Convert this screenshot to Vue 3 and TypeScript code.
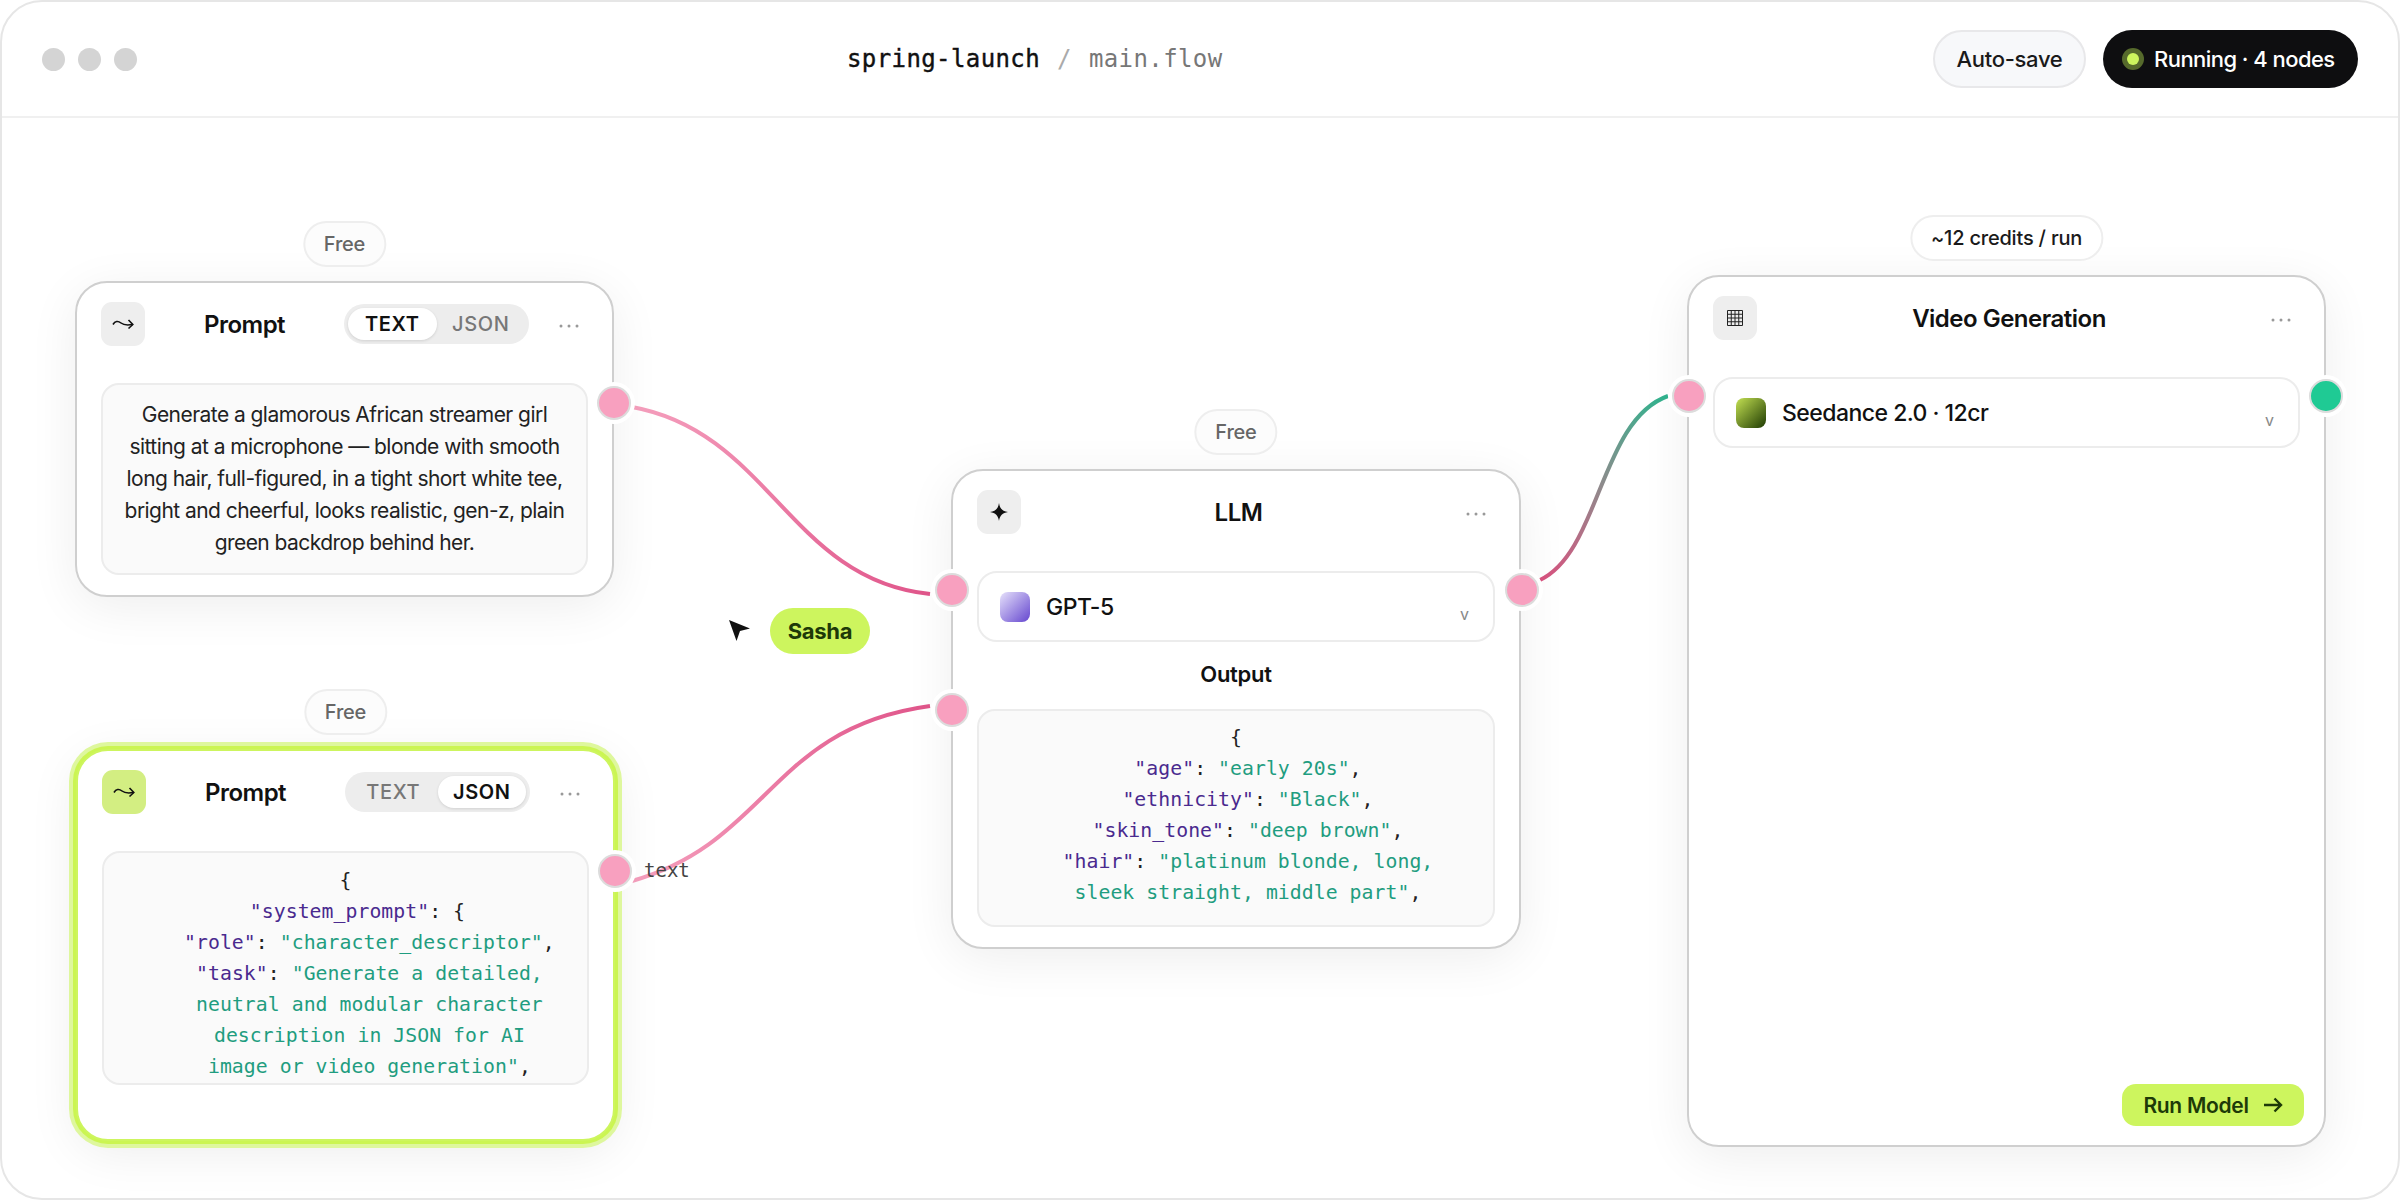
<template>
  <div class="window">
    <header class="topbar">
      <div class="lights">
        <span v-for="n in 3" :key="n" class="light"></span>
      </div>
      <div class="path">
        <span class="path-project">spring-launch</span>
        <span class="path-sep">/</span>
        <span class="path-file">main.flow</span>
      </div>
      <div class="actions">
        <button class="btn-autosave">Auto-save</button>
        <div class="status">
          <span class="status-dot"></span>
          <span>Running · 4 nodes</span>
        </div>
      </div>
    </header>

    <main class="canvas">
      <svg class="wires" width="2400" height="1200" viewBox="0 0 2400 1200" fill="none">
        <defs>
          <linearGradient id="wire-a" gradientUnits="userSpaceOnUse" x1="632" y1="407" x2="930" y2="594">
            <stop offset="0" stop-color="#f59fbd" />
            <stop offset="1" stop-color="#e0558a" />
          </linearGradient>
          <linearGradient id="wire-b" gradientUnits="userSpaceOnUse" x1="632" y1="881" x2="930" y2="706">
            <stop offset="0" stop-color="#f59fbd" />
            <stop offset="1" stop-color="#e0558a" />
          </linearGradient>
          <linearGradient id="wire-c" gradientUnits="userSpaceOnUse" x1="1540" y1="580" x2="1668" y2="396">
            <stop offset="0" stop-color="#d9527f" />
            <stop offset="0.5" stop-color="#8f8a8c" />
            <stop offset="1" stop-color="#2fb48e" />
          </linearGradient>
        </defs>
        <path d="M632 407C770 432 790 580 930 594" stroke="url(#wire-a)" stroke-width="4" />
        <path d="M632 881C770 842 770 728 930 706" stroke="url(#wire-b)" stroke-width="4" />
        <path d="M1540 580C1600 552 1600 420 1668 396" stroke="url(#wire-c)" stroke-width="4" />
      </svg>

      <section v-for="node in nodes" :key="node.id" class="node" :class="[node.id, { selected: node.selected }]">
        <span class="badge" :class="{ strong: node.badgeStrong }">{{ node.badge }}</span>

        <div class="node-head">
          <span class="node-icon">
            <svg v-if="node.icon === 'squiggle'" width="22" height="12" viewBox="0 0 22 12" fill="none" stroke="#111" stroke-width="1.6">
              <path d="M1 6.500C3 3 6 2.500 9 5S15 7.500 20.500 6.500" />
              <path d="M16.500 2L20.800 6.500L16.500 10.500" />
            </svg>
            <svg v-else-if="node.icon === 'star'" width="18" height="18" viewBox="0 0 18 18">
              <path d="M9 0C9.800 5.500 12.500 8.200 18 9C12.500 9.800 9.800 12.500 9 18C8.200 12.500 5.500 9.800 0 9C5.500 8.200 8.200 5.500 9 0Z" fill="#111" />
            </svg>
            <svg v-else width="16" height="16" viewBox="0 0 16 16" fill="none" stroke="#222" stroke-width="1">
              <path d="M.5 .5H15.500V15.500H.5ZM.5 4.250H15.500M.5 8H15.500M.5 11.750H15.500M4.250 .5V15.500M8 .5V15.500M11.750 .5V15.500" />
            </svg>
          </span>
          <h3 class="node-title">{{ node.title }}</h3>
          <div v-if="node.mode" class="mode">
            <span class="mode-opt" :class="{ on: node.mode === 'TEXT' }">TEXT</span>
            <span class="mode-opt" :class="{ on: node.mode === 'JSON' }">JSON</span>
          </div>
          <svg class="more" width="20" height="4" viewBox="0 0 20 4" fill="#999">
            <circle cx="2" cy="2" r="1.500" />
            <circle cx="10" cy="2" r="1.500" />
            <circle cx="18" cy="2" r="1.500" />
          </svg>
        </div>

        <div v-if="node.model" class="select">
          <span class="swatch" :class="node.model.swatch"></span>
          <span class="select-label">{{ node.model.label }}</span>
          <span class="chevron">v</span>
        </div>

        <div v-if="node.output" class="output-label">Output</div>

        <p v-if="node.text" class="box text-box">{{ node.text }}</p>

        <div v-if="node.code" class="box code-box">
          <div v-for="(line, i) in node.code" :key="i" class="code-line">
            <span v-for="(tok, j) in line" :key="j" :class="tok.c">{{ tok.t }}</span>
          </div>
        </div>

        <button v-if="node.run" class="run">
          Run Model
          <svg width="20" height="16" viewBox="0 0 20 16" fill="none" stroke="#1d3a08" stroke-width="2.400">
            <path d="M1 8H18M11.500 1.500L18 8L11.500 14.500" />
          </svg>
        </button>

        <span v-for="p in node.ports" :key="p.cls" class="port" :class="p.cls"></span>
        <span v-if="node.selected" class="port-label">text</span>
      </section>

      <div class="cursor">
        <svg width="22" height="22" viewBox="0 0 22 22">
          <path d="M0 0L21 8.500L11 11L7.500 21Z" fill="#111" />
        </svg>
        <span class="cursor-tag">Sasha</span>
      </div>
    </main>
  </div>
</template>

<script setup lang="ts">
type Token = { t: string; c: string };

interface FlowNode {
  id: string;
  title: string;
  badge: string;
  badgeStrong?: boolean;
  icon: 'squiggle' | 'star' | 'grid';
  mode?: 'TEXT' | 'JSON';
  selected?: boolean;
  model?: { label: string; swatch: string };
  output?: boolean;
  text?: string;
  code?: Token[][];
  run?: boolean;
  ports: { cls: string }[];
}

const k = (t: string): Token => ({ t, c: 'key' });
const s = (t: string): Token => ({ t, c: 'str' });
const p = (t: string): Token => ({ t, c: 'punc' });

const nodes: FlowNode[] = [
  {
    id: 'prompt-a',
    title: 'Prompt',
    badge: 'Free',
    icon: 'squiggle',
    mode: 'TEXT',
    text: 'Generate a glamorous African streamer girl sitting at a microphone — blonde with smooth long hair, full-figured, in a tight short white tee, bright and cheerful, looks realistic, gen-z, plain green backdrop behind her.',
    ports: [{ cls: 'out-a' }]
  },
  {
    id: 'prompt-b',
    title: 'Prompt',
    badge: 'Free',
    icon: 'squiggle',
    mode: 'JSON',
    selected: true,
    code: [
      [p('{')],
      [p('  '), k('"system_prompt"'), p(': {')],
      [p('    '), k('"role"'), p(': '), s('"character_descriptor"'), p(',')],
      [p('    '), k('"task"'), p(': '), s('"Generate a detailed,')],
      [p('    '), s('neutral and modular character')],
      [p('    '), s('description in JSON for AI')],
      [p('    '), s('image or video generation"'), p(',')]
    ],
    ports: [{ cls: 'out-b' }]
  },
  {
    id: 'llm',
    title: 'LLM',
    badge: 'Free',
    icon: 'star',
    model: { label: 'GPT-5', swatch: 'violet' },
    output: true,
    code: [
      [p('{')],
      [p('  '), k('"age"'), p(': '), s('"early 20s"'), p(',')],
      [p('  '), k('"ethnicity"'), p(': '), s('"Black"'), p(',')],
      [p('  '), k('"skin_tone"'), p(': '), s('"deep brown"'), p(',')],
      [p('  '), k('"hair"'), p(': '), s('"platinum blonde, long,')],
      [p('  '), s('sleek straight, middle part"'), p(',')]
    ],
    ports: [{ cls: 'in-a' }, { cls: 'in-b' }, { cls: 'out-a' }]
  },
  {
    id: 'video',
    title: 'Video Generation',
    badge: '~12 credits / run',
    badgeStrong: true,
    icon: 'grid',
    model: { label: 'Seedance 2.0 · 12cr', swatch: 'olive' },
    run: true,
    ports: [{ cls: 'in-a' }, { cls: 'out-a green' }]
  }
];
</script>

<style>
html,
body {
  margin: 0;
  background: #fff;
}
</style>

<style scoped>
.window {
  position: relative;
  box-sizing: border-box;
  width: 2400px;
  height: 1200px;
  display: flex;
  flex-direction: column;
  background: #fff;
  border: 2px solid #e6e6e6;
  border-radius: 42px;
  overflow: hidden;
  font-family: Inter, "Noto Sans", sans-serif;
  color: #111;
}

.topbar {
  flex: none;
  height: 116px;
  box-sizing: border-box;
  display: flex;
  align-items: center;
  justify-content: space-between;
  padding: 0 40px;
  border-bottom: 2px solid #f0f0f0;
  position: relative;
}

.lights {
  display: flex;
  gap: 13px;
}

.light {
  width: 23px;
  height: 23px;
  border-radius: 50%;
  background: #d4d4d4;
}

.path {
  position: absolute;
  left: 845px;
  top: 0;
  height: 114px;
  display: flex;
  align-items: center;
  font-family: "DejaVu Sans Mono", monospace;
  font-size: 24px;
  letter-spacing: 0.4px;
}

.path-project {
  color: #111;
  -webkit-text-stroke: 0.4px #111;
}

.path-sep {
  color: #aaa;
  margin: 0 17px;
}

.path-file {
  color: #777;
}

.actions {
  display: flex;
  align-items: center;
  gap: 17px;
}

.btn-autosave {
  height: 58px;
  width: 153px;
  border: 2px solid #e8e8ea;
  border-radius: 29px;
  background: #f7f8fa;
  font: 500 22px Inter, sans-serif;
  letter-spacing: -0.3px;
  color: #1a1a1a;
}

.status {
  height: 58px;
  width: 255px;
  box-sizing: border-box;
  display: flex;
  align-items: center;
  gap: 10px;
  padding-left: 19px;
  border-radius: 29px;
  background: #0e0e10;
  color: #fff;
  font-size: 22px;
  font-weight: 500;
  letter-spacing: -0.55px;
}

.status-dot {
  width: 12px;
  height: 12px;
  margin: 0 5px;
  border-radius: 50%;
  background: #cdf55e;
  box-shadow: 0 0 0 5px #566a2c;
}

.canvas {
  position: relative;
  flex: 1;
}

.wires {
  position: absolute;
  left: -2px;
  top: -118px;
}

.node {
  position: absolute;
  box-sizing: border-box;
  display: flex;
  flex-direction: column;
  padding: 19px 24px;
  background: #fff;
  border: 2px solid #cfcfcf;
  border-radius: 32px;
  box-shadow: 0 10px 50px rgba(0, 0, 0, 0.07);
}

.prompt-a {
  left: 73px;
  top: 163px;
  width: 539px;
  height: 316px;
}

.prompt-b {
  left: 74px;
  top: 631px;
  width: 539px;
  height: 392px;
  border: 2px solid #cdf55e;
  box-shadow: 0 0 0 3px #cbf552, 0 0 0 7px #def79d, 0 10px 50px rgba(0, 0, 0, 0.08);
}

.llm {
  left: 949px;
  top: 351px;
  width: 570px;
  height: 480px;
}

.video {
  left: 1685px;
  top: 157px;
  width: 639px;
  height: 872px;
}

.badge {
  position: absolute;
  left: 50%;
  top: -62px;
  transform: translateX(-50%);
  height: 46px;
  box-sizing: border-box;
  display: flex;
  align-items: center;
  padding: 0 19px;
  border: 2px solid #eeeeee;
  border-radius: 23px;
  background: #fcfcfc;
  font-size: 20px;
  font-weight: 500;
  color: #666;
  white-space: nowrap;
  letter-spacing: -0.2px;
}

.badge.strong {
  background: #fff;
  color: #1a1a1a;
}

.node-head {
  display: flex;
  align-items: center;
  height: 44px;
  flex: none;
}

.node-icon {
  flex: none;
  width: 44px;
  height: 44px;
  border-radius: 11px;
  background: #eeeeee;
  display: flex;
  align-items: center;
  justify-content: center;
}

.selected .node-icon {
  background: #d3ee82;
}

.node-title {
  flex: 1;
  margin: 0;
  text-align: center;
  font-size: 24px;
  font-weight: 600;
  letter-spacing: -0.5px;
  color: #111;
}

.mode {
  flex: none;
  display: flex;
  align-items: center;
  box-sizing: border-box;
  width: 185px;
  height: 40px;
  margin-right: 20px;
  padding: 4px;
  border-radius: 20px;
  background: #ededed;
}

.mode-opt {
  flex: 1;
  height: 32px;
  display: flex;
  align-items: center;
  justify-content: center;
  border-radius: 16px;
  font-size: 20px;
  font-weight: 500;
  letter-spacing: 0.6px;
  color: #777;
}

.mode-opt.on {
  background: #fff;
  color: #111;
  font-weight: 600;
  box-shadow: 0 1px 3px rgba(0, 0, 0, 0.12);
}

.more {
  flex: none;
  margin: 4px 9px 0 10px;
}

.box {
  box-sizing: border-box;
  margin: 0;
  background: #fafafa;
  border: 2px solid #ececec;
  border-radius: 18px;
  text-align: center;
}

.text-box {
  height: 192px;
  margin-top: 37px;
  padding: 14px 20px 0;
  font-size: 21px;
  line-height: 32px;
  letter-spacing: -0.55px;
  color: #222;
}

.code-box {
  overflow: hidden;
  font-family: "DejaVu Sans Mono", monospace;
  font-size: 19.800px;
  letter-spacing: 0.05px;
  line-height: 31px;
}

.prompt-b .code-box {
  height: 234px;
  margin-top: 37px;
  padding-top: 12px;
}

.llm .code-box {
  height: 218px;
  margin-top: 20px;
  padding-top: 11px;
}

.code-line {
  white-space: pre;
}

.key {
  color: #4a2a8f;
}

.str {
  color: #1f9d80;
}

.punc {
  color: #222;
}

.select {
  flex: none;
  box-sizing: border-box;
  height: 71px;
  margin-top: 37px;
  display: flex;
  align-items: center;
  padding: 0 24px 0 21px;
  background: #fff;
  border: 2px solid #ececec;
  border-radius: 20px;
}

.swatch {
  flex: none;
  width: 30px;
  height: 30px;
  border-radius: 8px;
}

.swatch.violet {
  background: linear-gradient(135deg, #e6e1fb, #6547cf);
}

.swatch.olive {
  background: linear-gradient(135deg, #c3e052, #1e3a02);
}

.select-label {
  flex: 1;
  margin-left: 16px;
  font-size: 23px;
  font-weight: 500;
  letter-spacing: -0.53px;
  color: #111;
}

.chevron {
  font-size: 16px;
  margin-top: 14px;
  color: #888;
}

.output-label {
  margin-top: 17px;
  text-align: center;
  font-size: 22px;
  line-height: 30px;
  font-weight: 600;
  letter-spacing: -0.3px;
  color: #111;
}

.run {
  align-self: flex-end;
  margin: auto -4px 0 0;
  width: 182px;
  height: 42px;
  display: flex;
  align-items: center;
  justify-content: center;
  gap: 14px;
  border: none;
  border-radius: 14px;
  background: #cdf55e;
  font: 600 21px Inter, sans-serif;
  letter-spacing: -0.3px;
  color: #1d3a08;
}

.port {
  position: absolute;
  width: 34px;
  height: 34px;
  box-sizing: border-box;
  border: 2px solid #dcdcdc;
  border-radius: 50%;
  background: #f8a0bf;
  box-shadow: 0 0 0 4px #fff;
}

.port.green {
  background: #1fca94;
}

.prompt-a .out-a {
  left: 520px;
  top: 103px;
}

.prompt-b .out-b {
  left: 520px;
  top: 103px;
}

.llm .in-a {
  left: -18px;
  top: 102px;
}

.llm .in-b {
  left: -18px;
  top: 222px;
}

.llm .out-a {
  left: 552px;
  top: 102px;
}

.video .in-a {
  left: -17px;
  top: 102px;
}

.video .out-a {
  left: 620px;
  top: 102px;
}

.port-label {
  position: absolute;
  left: 566px;
  top: 107px;
  font-family: "DejaVu Sans Mono", monospace;
  font-size: 19px;
  line-height: 24px;
  color: #444;
}

.cursor {
  position: absolute;
  left: 727px;
  top: 490px;
  display: flex;
  align-items: flex-start;
  gap: 19px;
}

.cursor svg {
  margin-top: 12px;
}

.cursor-tag {
  width: 100px;
  height: 46px;
  display: flex;
  align-items: center;
  justify-content: center;
  border-radius: 23px;
  background: #cdf55e;
  font-size: 22px;
  font-weight: 700;
  letter-spacing: -0.3px;
  color: #1d3a08;
}
</style>
